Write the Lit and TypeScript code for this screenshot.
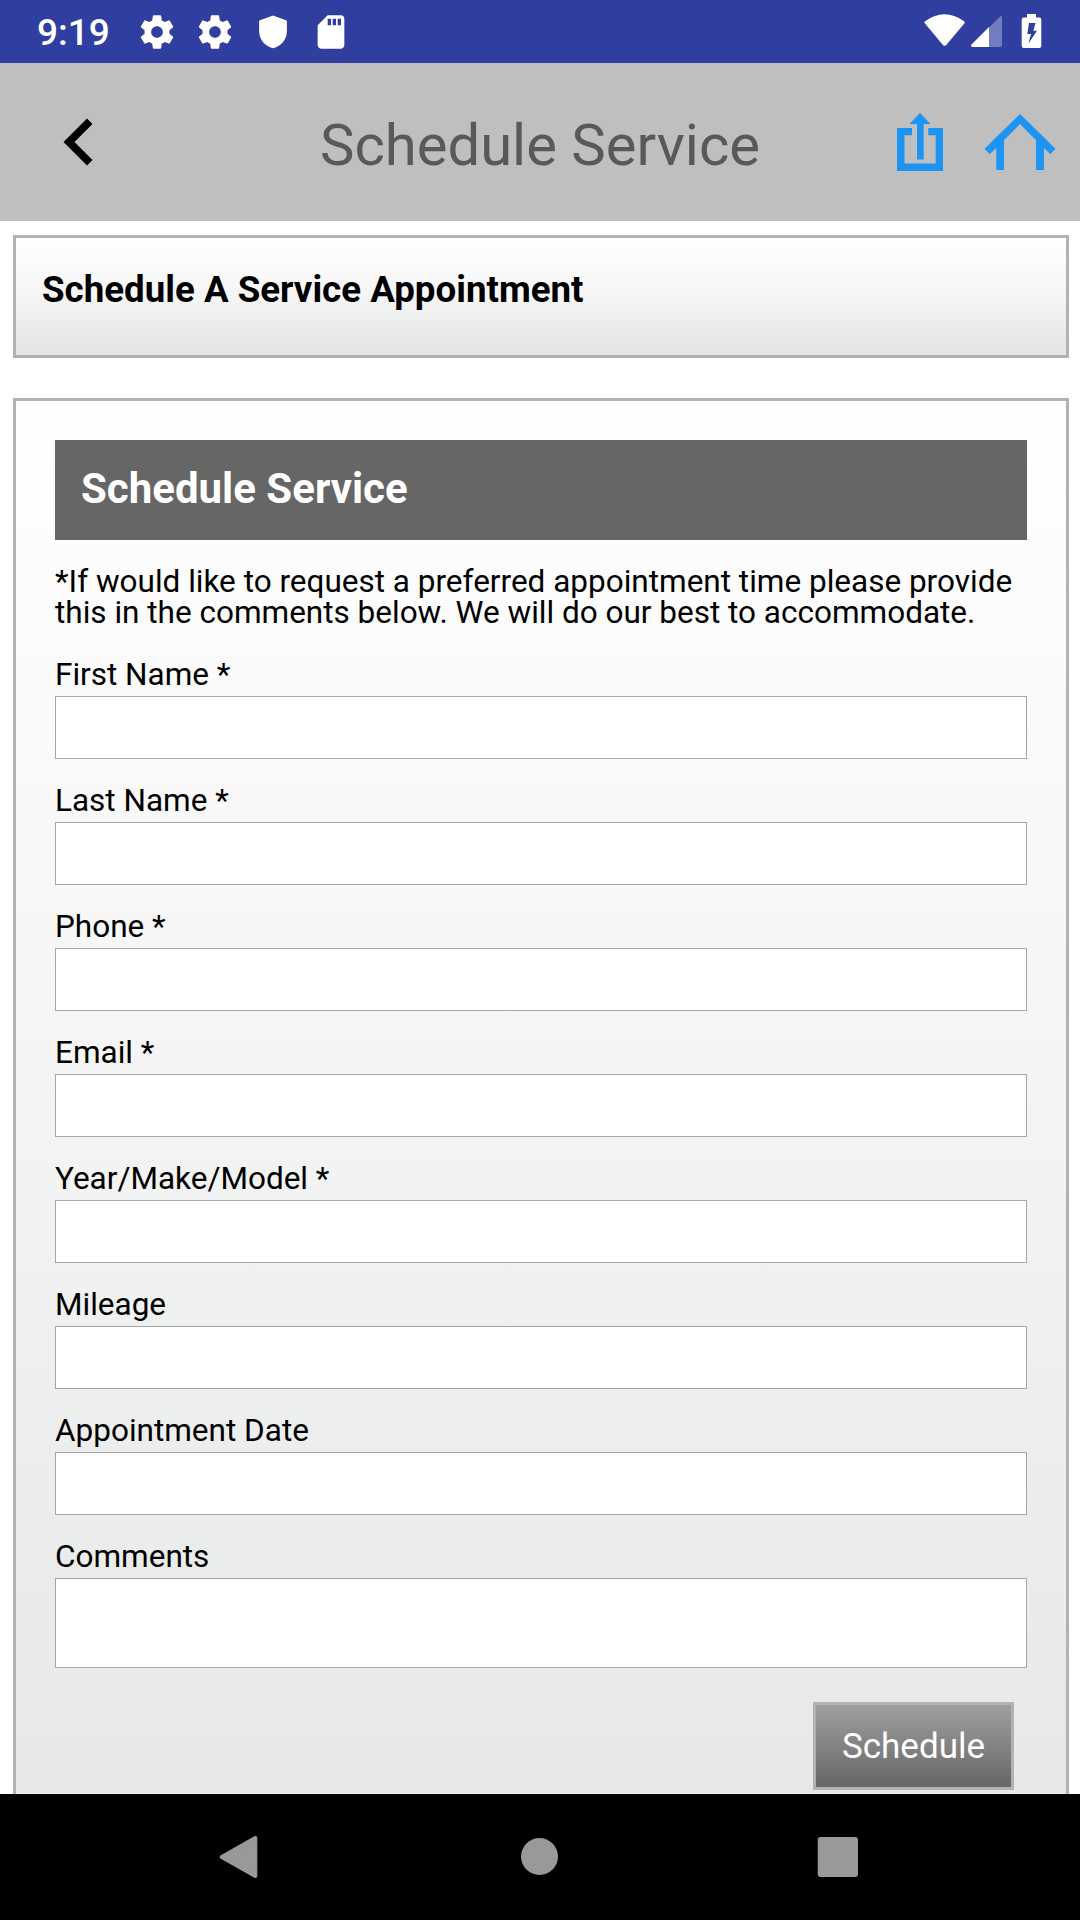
import { LitElement, html, css, svg } from "lit";
import { customElement } from "lit/decorators.js";

const gear = svg`<path fill="#fff" fill-rule="evenodd" d="M19.43 12.98c.04-.32.07-.64.07-.98s-.03-.66-.07-.98l2.11-1.65c.19-.15.24-.42.12-.64l-2-3.46c-.12-.22-.39-.3-.61-.22l-2.49 1c-.52-.4-1.08-.73-1.69-.98l-.38-2.65C14.46 2.18 14.25 2 14 2h-4c-.25 0-.46.18-.49.42l-.38 2.65c-.61.25-1.17.59-1.69.98l-2.49-1c-.23-.09-.49 0-.61.22l-2 3.46c-.13.22-.07.49.12.64l2.11 1.65c-.04.32-.07.65-.07.98s.03.66.07.98l-2.11 1.65c-.19.15-.24.42-.12.64l2 3.46c.12.22.39.3.61.22l2.49-1c.52.4 1.08.73 1.69.98l.38 2.65c.03.24.24.42.49.42h4c.25 0 .46-.18.49-.42l.38-2.65c.61-.25 1.17-.59 1.69-.98l2.49 1c.23.09.49 0 .61-.22l2-3.46c.12-.22.07-.49-.12-.64l-2.11-1.65zM12 15.5c-1.93 0-3.5-1.57-3.5-3.5s1.57-3.5 3.5-3.5 3.5 1.57 3.5 3.5-1.57 3.5-3.5 3.5z"/>`;

const FIELDS = [
  "First Name *",
  "Last Name *",
  "Phone *",
  "Email *",
  "Year/Make/Model *",
  "Mileage",
  "Appointment Date",
];

@customElement("app-root")
export class AppRoot extends LitElement {
  static styles = css`
    :host {
      display: flex;
      flex-direction: column;
      width: 1080px;
      height: 1920px;
      overflow: hidden;
      background: #fff;
      color: #000;
      font-family: Roboto, sans-serif;
    }
    * { box-sizing: border-box; }
    svg { display: block; flex: none; }
    .status {
      flex: none;
      height: 63px;
      background: #303f9f;
      display: flex;
      align-items: flex-start;
      justify-content: space-between;
      padding: 0 38px 0 37px;
    }
    .left, .right { display: flex; }
    .clock {
      width: 100px;
      font-size: 37px;
      font-weight: 500;
      line-height: 44px;
      padding-top: 11px;
      color: #fff;
      white-space: nowrap;
    }
    .left svg { margin-top: 12px; }
    .notices { display: flex; gap: 18px; }
    .right svg { margin-top: 10px; }
    .bar {
      flex: none;
      height: 158px;
      background: #bfbfbf;
      display: grid;
      grid-template-columns: 250px 1fr 250px;
      align-items: center;
    }
    .back { margin-left: 58px; }
    .title {
      margin: 0;
      padding-top: 5px;
      text-align: center;
      font-size: 58px;
      line-height: 68px;
      font-weight: 400;
      color: #595959;
      white-space: nowrap;
    }
    .actions { display: flex; gap: 35px; padding-left: 63px; }
    .page {
      flex: 1;
      min-height: 0;
      overflow: hidden;
      padding: 14px 11px 0 13px;
    }
    .card {
      border: 3px solid #b2b2b2;
      background: linear-gradient(to bottom, #fff 0%, #f6f6f6 47%, #ebedec 75%, #e4e5e7 100%);
    }
    .intro {
      height: 123px;
      padding: 31px 26px 0;
      font-size: 36.700px;
      line-height: 42px;
      font-weight: 700;
      margin: 0 0 40px;
    }
    .form {
      height: 1520px;
      padding: 39px;
      background: linear-gradient(to bottom, #fff 0%, #f6f6f6 38%, #eceeed 70%, #e5e6e8 100%);
    }
    .banner {
      margin: 0;
      height: 100px;
      background: #666;
      color: #fff;
      font-size: 42px;
      font-weight: 700;
      line-height: 98px;
      padding-left: 26px;
    }
    .note {
      margin: 0;
      padding-top: 26px;
      font-size: 31.500px;
      line-height: 31px;
      white-space: nowrap;
    }
    .field { display: block; font-size: 31.500px; line-height: 31px; padding-top: 26px; }
    .field:first-of-type { padding-top: 31px; }
    .label { display: block; height: 37px; }
    .input {
      display: block;
      width: 100%;
      height: 63px;
      border: 1px solid #a6a6a6;
      border-radius: 0;
      background: #fff;
      margin: 0;
      padding: 0 10px;
      font: inherit;
      outline: none;
      resize: none;
      overflow: hidden;
    }
    .area { height: 90px; }
    .foot { display: flex; justify-content: flex-end; padding: 34px 13px 0 0; }
    .submit {
      width: 201px;
      height: 88px;
      border: 3px solid #b2b2b2;
      border-radius: 0;
      background: linear-gradient(to bottom, #9f9f9f, #666);
      color: #fff;
      font-family: inherit;
      font-size: 35px;
      line-height: 40px;
      padding: 2px 0 0;
      margin: 0;
    }
    .nav {
      flex: none;
      height: 126px;
      background: #000;
      display: flex;
      align-items: center;
      justify-content: space-between;
      padding: 0 219px 0 217px;
    }
  `;

  render() {
    return html`
      <div class="status">
        <div class="left">
          <div class="clock">9:19</div>
          <div class="notices">
            <svg width="40" height="40" viewBox="0 0 24 24">${gear}</svg>
            <svg width="40" height="40" viewBox="0 0 24 24">${gear}</svg>
            <svg width="40" height="40" viewBox="0 0 40 40">
              <path fill="#fff" d="M20 3.4 L33 8.2 Q33.9 8.6 33.9 9.6 V18.5 C33.9 27.5 28.5 34 20 36.2 C11.500 34 6.100 27.500 6.100 18.500 V9.600 Q6.100 8.600 7 8.200 Z"/>
            </svg>
            <svg width="40" height="40" viewBox="0 0 24 24">
              <path fill="#fff" d="M18 2h-8L4.020 8 4 20c0 1.100.9 2 2 2h12c1.100 0 2-.9 2-2V4c0-1.100-.9-2-2-2zm-6 6h-2V4h2v4zm3 0h-2V4h2v4zm3 0h-2V4h2v4z"/>
            </svg>
          </div>
        </div>
        <div class="right">
          <svg width="122" height="42" viewBox="920 10 122 42">
            <path fill="#fff" d="M925 23.500 Q923.800 22.300 925.200 21.200 Q944.500 7.500 964 21.200 Q965.400 22.300 964.300 23.500 L946.300 45 Q944.600 46.700 942.900 45 Z"/>
            <path fill="#fff" fill-opacity=".32" d="M989 27.500 L1000.200 16.500 Q1002 15.200 1002 17.200 V45 Q1002 47 1000 47 H989 Z"/>
            <path fill="#fff" d="M989 27 V47 H972.500 Q970 46.500 971.500 44.600 Z"/>
            <path fill="#fff" fill-rule="evenodd" d="M1027 14 H1036 V17.500 H1039.300 Q1041.300 17.500 1041.300 19.500 V46 Q1041.300 48 1039.300 48 H1023.700 Q1021.700 48 1021.700 46 V19.500 Q1021.700 17.500 1023.700 17.500 H1027 Z M1029 23 L1027.300 34 H1031 L1028.500 43.500 L1037 30.800 H1033.300 L1035.500 23 Z"/>
          </svg>
        </div>
      </div>

      <div class="bar">
        <svg class="back" width="40" height="60" viewBox="58 112 40 60">
          <path d="M63.500 142 L87 118.500 L92.500 124 L74.500 142 L92.500 160 L87 165.500 Z"/>
        </svg>
        <h1 class="title">Schedule Service</h1>
        <div class="actions">
          <svg width="54" height="64" viewBox="893 110 54 64">
            <path fill="#1c94f4" d="M897 128 H912 V135.300 H904.500 V163.500 H935.700 V135.300 H928.300 V128 H943 V171 H897 Z M920 113 L930.500 124 H923.700 V159.500 H917 V124 H909.500 Z"/>
          </svg>
          <svg width="76" height="64" viewBox="982 110 76 64">
            <path fill="#1c94f4" d="M1020 114 L1055.500 148.800 L1050.200 154 L1044 148 V170 H1036 V140.200 L1020 124 L1004 140.200 V170 H996.300 V148 L989.800 154 L984.500 148.800 Z"/>
          </svg>
        </div>
      </div>

      <main class="page">
        <h2 class="card intro">Schedule A Service Appointment</h2>
        <form class="card form">
          <h3 class="banner">Schedule Service</h3>
          <p class="note">*If would like to request a preferred appointment time please provide<br />this in the comments below. We will do our best to accommodate.</p>
          ${FIELDS.map(
            (name) => html`<label class="field"><span class="label">${name}</span><input class="input" type="text" /></label>`
          )}
          <label class="field"><span class="label">Comments</span><textarea class="input area"></textarea></label>
          <div class="foot"><button class="submit" type="button">Schedule</button></div>
        </form>
      </main>

      <nav class="nav">
        <svg width="44" height="46" viewBox="217 1834 44 46">
          <path fill="#999" stroke="#999" stroke-width="4" stroke-linejoin="round" d="M221.800 1857 L255.300 1838 V1876 Z"/>
        </svg>
        <svg width="40" height="40" viewBox="0 0 40 40"><circle cx="20.500" cy="19.500" r="18.500" fill="#999"/></svg>
        <svg width="44" height="44" viewBox="0 0 44 44"><rect x="0.700" y="2" width="40.300" height="40" rx="3" fill="#999"/></svg>
      </nav>
    `;
  }
}
